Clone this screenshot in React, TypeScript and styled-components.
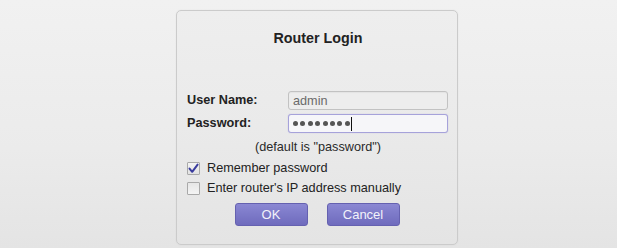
import React from 'react';
import styled, { createGlobalStyle } from 'styled-components';

const GlobalStyle = createGlobalStyle`
  html, body {
    margin: 0;
    padding: 0;
  }
  body {
    width: 617px;
    height: 248px;
    overflow: hidden;
    background: linear-gradient(180deg, #f1f1f1 0%, #ebebeb 60%, #e4e4e4 100%);
    font-family: 'Liberation Sans', Arial, sans-serif;
    color: #222;
  }
`;

const Page = styled.div`
  display: flex;
  justify-content: center;
  padding-top: 10px;
  padding-left: 17px;
`;

const Panel = styled.div`
  box-sizing: border-box;
  width: 282px;
  height: 235px;
  padding: 19px 9px 0;
  border: 1px solid #cbcbcb;
  border-radius: 5px;
  background: linear-gradient(180deg, #eeeeee 0%, #eaeaea 50%, #e4e4e4 100%);
  box-shadow: 0 0 2px rgba(0, 0, 0, 0.06);
  display: flex;
  flex-direction: column;
`;

const Title = styled.div`
  font-weight: bold;
  font-size: 14.3px;
  line-height: 16px;
  text-align: center;
  color: #222;
  padding-left: 2px;
`;

const Form = styled.div`
  display: grid;
  grid-template-columns: 101px 1fr;
  row-gap: 4px;
  margin-top: 45px;
  padding-left: 1px;
`;

const Label = styled.div`
  font-weight: bold;
  font-size: 12.7px;
  line-height: 19px;
  color: #222;
`;

const Field = styled.div<{ $focused?: boolean }>`
  box-sizing: border-box;
  height: 19px;
  border-radius: 3px;
  border: 1px solid ${p => (p.$focused ? '#a6a2da' : '#c2c2c2')};
  background: ${p => (p.$focused ? '#f6f6f9' : '#ededed')};
  box-shadow: ${p => (p.$focused ? '0 0 1px rgba(120, 110, 210, 0.5)' : 'inset 0 1px 1px rgba(0,0,0,0.04)')};
  padding: 0 4px;
  display: flex;
  align-items: center;
  font-size: 12.7px;
  color: #6a6a6a;
`;

const Dot = styled.span`
  width: 5px;
  height: 5px;
  border-radius: 50%;
  background: #555;
  margin-right: 2.4px;
  flex: none;
`;

const Caret = styled.span`
  width: 1px;
  height: 14px;
  background: #111;
  margin-left: -1px;
`;

const Hint = styled.div`
  margin-top: 6px;
  font-size: 12.7px;
  line-height: 16px;
  text-align: center;
  color: #2a2a2a;
  padding-left: 2px;
`;

const Options = styled.div`
  margin-top: 3px;
  display: flex;
  flex-direction: column;
`;

const OptionRow = styled.label`
  display: flex;
  align-items: center;
  height: 20px;
  gap: 7px;
  font-size: 12.7px;
  color: #222;
`;

const Box = styled.span<{ $checked?: boolean }>`
  box-sizing: border-box;
  width: 13px;
  height: 13px;
  border: 1px solid #a9a9a9;
  border-radius: 1px;
  background: ${p =>
    p.$checked
      ? 'linear-gradient(180deg, #f4f4f4, #e2e2e2)'
      : 'linear-gradient(180deg, #e6e6e6, #f4f4f4)'};
  display: flex;
  align-items: center;
  justify-content: center;
  margin-left: 1px;
  flex: none;
`;

const Buttons = styled.div`
  display: flex;
  justify-content: center;
  gap: 19px;
  margin-top: 5px;
`;

const Button = styled.button`
  box-sizing: border-box;
  width: 73px;
  height: 23px;
  border: 1px solid #6561b0;
  border-radius: 3px;
  background: linear-gradient(180deg, #8b88d3 0%, #7c79c8 50%, #6f6bbd 100%);
  color: #f2f2fa;
  font-family: 'Liberation Sans', Arial, sans-serif;
  font-size: 13px;
  padding: 0;
  cursor: pointer;
`;

const Check = () => (
  <svg width="11" height="11" viewBox="0 0 11 11">
    <path d="M1.5 5.6 L4.2 8.8 L9.6 1.6" fill="none" stroke="#3a3c9e" strokeWidth="2" strokeLinecap="round" strokeLinejoin="round" />
  </svg>
);

export default function App() {
  return (
    <>
      <GlobalStyle />
      <Page>
        <Panel>
          <Title>Router Login</Title>
          <Form>
            <Label>User Name:</Label>
            <Field>admin</Field>
            <Label>Password:</Label>
            <Field $focused>
              {Array.from({ length: 8 }).map((_, i) => (
                <Dot key={i} />
              ))}
              <Caret />
            </Field>
          </Form>
          <Hint>(default is "password")</Hint>
          <Options>
            <OptionRow>
              <Box $checked>
                <Check />
              </Box>
              Remember password
            </OptionRow>
            <OptionRow>
              <Box />
              Enter router's IP address manually
            </OptionRow>
          </Options>
          <Buttons>
            <Button>OK</Button>
            <Button>Cancel</Button>
          </Buttons>
        </Panel>
      </Page>
    </>
  );
}
